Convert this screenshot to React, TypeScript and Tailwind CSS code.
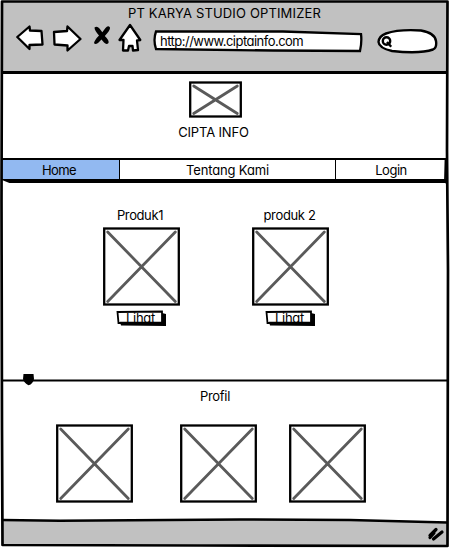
import React from "react";

function Label({ children, className = "" }: { children: React.ReactNode; className?: string }) {
  return (
    <span
      className={`block whitespace-nowrap text-center font-['Inter','Liberation_Sans',sans-serif] text-[13px] leading-4 text-black [font-feature-settings:'cv11'] ${className}`}
    >
      {children}
    </span>
  );
}

function Picture({ small = false }: { small?: boolean }) {
  const w = small ? 53 : 77;
  const h = small ? 37 : 79;
  return (
    <svg width={w} height={h} className="block shrink-0" fill="none">
      <rect x="1.2" y="1.5" width={w - 2.4} height={h - 3} fill="white" stroke="black" strokeWidth="2.3" />
      <path
        d={`M4.7 5L${w - 4.7} ${h - 4.5}M${w - 4.7} 5L4.7 ${h - 4.5}`}
        stroke="#5a5a5a"
        strokeWidth="2.8"
        strokeLinecap="round"
      />
    </svg>
  );
}

function SketchButton() {
  return (
    <button className="relative block h-[17px] w-[51px]">
      <svg width="51" height="17" className="absolute inset-0" fill="none">
        <path d="M1.5 2L46 1.5V12.8L2.5 13Z" fill="white" stroke="black" strokeWidth="1.8" />
      </svg>
      <Label className="absolute left-[10px] top-0 tracking-[-0.3px]">Lihat</Label>
      <svg width="51" height="17" className="absolute inset-0" fill="none">
        <path d="M4 11.8H46V3L50 4V16L5 15.5Z" fill="black" />
      </svg>
    </button>
  );
}

function Toolbar() {
  return (
    <div className="flex items-start pl-[16px]">
      <svg width="126" height="30" className="mt-[2px] block shrink-0" fill="none" stroke="black" strokeWidth="2.3" strokeLinejoin="round">
        <path d="M1.3 14L13.5 3.5L14 7.5L25.5 8L26.5 21.5L13.5 22L13.5 26Z" fill="white" />
        <path d="M38 9L51 8L51.5 3.5L64.5 16L51.5 27.5L51.5 22.5L38.5 21.5Z" fill="white" />
        <path
          d="M78.5 4.5Q81 2.5 83.5 5.5L86.3 9.2L89.5 5Q92 2 94 4.5Q94.5 7 88.8 13Q93.5 17.5 92.5 20Q90.5 22 88 19.5L85.5 16.5L82 20Q79 22 78 20Q78.5 17 83 12.5Q78.5 7.5 78.5 4.5Z"
          fill="black"
          stroke="none"
        />
        <path
          d="M114 2L124.3 17L121 17.5L122 27L117 27.5L116.5 23H113L112 27.5L107 27.5L107.5 17H103.5Z"
          fill="white"
        />
      </svg>
      <div className="relative ml-[11px] mt-[9px] h-[24px] w-[211px]">
        <svg width="211" height="24" className="absolute inset-0" fill="none">
          <path d="M3 1.5L130 1.5L208 4Q209 12 207 21L120 20.5L3 19Q0 10 3 1.5Z" fill="white" stroke="black" strokeWidth="2.3" />
        </svg>
        <Label className="absolute left-[7px] top-[3px] tracking-[-0.52px]">http://www.ciptainfo.com</Label>
      </div>
      <svg width="62" height="28" className="ml-[13px] mt-[7px] block shrink-0" fill="none" stroke="black" strokeWidth="2.4">
        <path d="M9 5.5Q22 1 44 2.5Q58 5 59 13Q60 20 56 21.5Q43 26 15 23Q2 20 1.5 14Q2 8 9 5.5Z" fill="white" />
        <circle cx="9.5" cy="13" r="3.7" />
        <path d="M10 14L14.2 18.8" strokeWidth="2.4" />
      </svg>
    </div>
  );
}

function Navigation() {
  return (
    <nav className="flex h-[25px] shrink-0 border-b-4 border-t-2 border-black bg-white pl-[2px] pr-[4px]">
      <div className="w-[117px] bg-[#92b9f1] pr-[3px] pt-[2px]">
        <Label className="tracking-[-0.6px]">Home</Label>
      </div>
      <div className="w-[217px] border-x border-black pt-[2px]">
        <Label className="tracking-[-0.15px]">Tentang Kami</Label>
      </div>
      <div className="flex-1 pt-[2px]">
        <Label className="tracking-[-0.5px]">Login</Label>
      </div>
    </nav>
  );
}

function Product({ name, tight = false }: { name: string; tight?: boolean }) {
  return (
    <article className="flex w-[77px] flex-col items-center">
      <Label className={tight ? "pr-[3px] tracking-[-0.4px]" : "pr-[2px] tracking-[-0.35px]"}>{name}</Label>
      <div className="mt-[4px]">
        <Picture />
      </div>
      <div className="mt-[4px]">
        <SketchButton />
      </div>
    </article>
  );
}

export default function App() {
  return (
    <div className="relative flex h-[548px] w-[450px] flex-col overflow-hidden bg-white">
      <header className="h-[74px] shrink-0 border-b-[3px] border-black bg-[#c1c1c1] pt-[5px]">
        <Label className="pr-[1px] tracking-[0.15px]">PT KARYA STUDIO OPTIMIZER</Label>
        <Toolbar />
      </header>
      <section className="flex h-[84px] shrink-0 flex-col items-center pr-[19px] pt-[7px]">
        <Picture small />
        <Label className="mt-[6px] pr-[4px] tracking-[-0.15px]">CIPTA INFO</Label>
      </section>
      <Navigation />
      <section className="flex h-[196px] shrink-0 gap-[72px] pl-[103px] pt-[24px]">
        <Product name="Produk1" tight />
        <Product name="produk 2" />
      </section>
      <div className="-mt-[5px] h-[12px] shrink-0 pl-[2px]">
        <svg width="446" height="12" className="block">
          <path d="M0 6.5H446" stroke="black" strokeWidth="2" />
          <path d="M21.5 0H31.5L32 5Q31 10 26.5 11.3Q22 9 21 5Z" fill="black" />
        </svg>
      </div>
      <section className="h-[132px] shrink-0">
        <Label className="mt-[2px] pr-[20px] tracking-[-0.3px]">Profil</Label>
        <div className="mt-[20px] flex pl-[56px]">
          <Picture />
          <div className="ml-[47px]"><Picture /></div>
          <div className="ml-[32px]"><Picture /></div>
        </div>
      </section>
      <footer className="h-[30px] shrink-0">
        <svg width="450" height="30" className="block">
          <path d="M2 2L60 2.7L240 1.5L350 2L447 4.5V27.5L2 26Z" fill="#c1c1c1" />
          <path d="M2 2L60 2.7L240 1.5L350 2L447 4.5" fill="none" stroke="black" strokeWidth="2.5" />
          <path d="M430 17.5L436 11.5M433.5 21L442 14M430 19.5L434 15" stroke="black" strokeWidth="3.2" strokeLinecap="round" />
        </svg>
      </footer>
      <svg width="450" height="548" className="pointer-events-none absolute inset-0" fill="none">
        <path d="M0 0H450V548H0Z M2 2V545.5H448V2Z" fill="white" fillRule="evenodd" />
        <path d="M2 180L10 183.2H2Z" fill="white" />
        <path d="M2 1.5H447.5L447 150L448 270L447.5 546L200 545.5L2.5 545L2 430L1.5 200Z" stroke="black" strokeWidth="2.7" strokeLinejoin="round" />
        <path d="M445.5 160L445 180L447 184" stroke="black" strokeWidth="1.8" />
      </svg>
    </div>
  );
}
